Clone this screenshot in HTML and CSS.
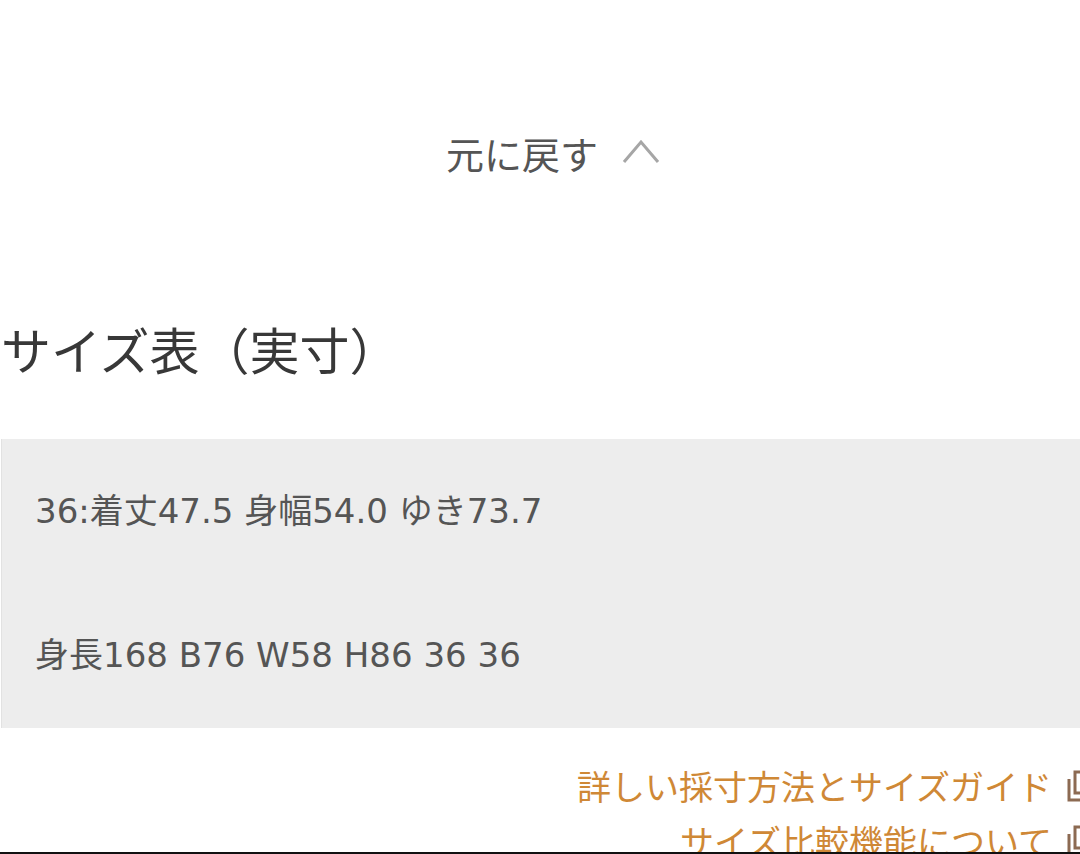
FILE: index.html
```html
<!DOCTYPE html>
<html lang="ja">
<head>
<meta charset="utf-8">
<link rel="stylesheet" href="styles.css">
</head>
<body>
<div class="page">
  <div class="collapse">
    <span class="collapse-label">元に戻す</span>
    <svg class="chevron" width="38" height="26" viewBox="0 0 38 26"><path d="M2 24 L19 4 L36 24" fill="none" stroke="#a6a6a6" stroke-width="3"/></svg>
  </div>
  <h2 class="title">サイズ表（実寸）</h2>
  <div class="size-box">
    <p class="size-row">36:着丈47.5 身幅54.0 ゆき73.7</p>
    <p class="size-row">身長168 B76 W58 H86 36 36</p>
  </div>
  <div class="links">
    <a class="link">詳しい採寸方法とサイズガイド<svg class="ext" width="30" height="34" viewBox="0 0 30 34"><path d="M9 3 H28 V24 H9 Z" fill="none" stroke="#8c6a52" stroke-width="3"/><path d="M3 10 V31 H22" fill="none" stroke="#8c6a52" stroke-width="3"/></svg></a>
    <a class="link">サイズ比較機能について<svg class="ext" width="30" height="34" viewBox="0 0 30 34"><path d="M9 3 H28 V24 H9 Z" fill="none" stroke="#8c6a52" stroke-width="3"/><path d="M3 10 V31 H22" fill="none" stroke="#8c6a52" stroke-width="3"/></svg></a>
  </div>
</div>
<div class="bottom-bar"></div>
</body>
</html>
```
FILE: styles.css
```css
html, body {
  margin: 0;
  padding: 0;
  background: #fff;
  overflow: hidden;
}
body {
  width: 1080px;
  height: 854px;
  position: relative;
  font-family: "Noto Sans CJK JP", "Noto Sans", sans-serif;
}
.page {
  height: 852px;
  overflow: hidden;
}
.collapse {
  display: flex;
  justify-content: center;
  align-items: center;
  gap: 24px;
  padding: 123px 0 0 26px;
  height: 60px;
}
.collapse-label {
  font-size: 38px;
  line-height: 56px;
  color: #555;
}
.chevron {
  display: block;
  margin-top: -4px;
}
.title {
  margin: 131px 0 0 1px;
  font-size: 50px;
  line-height: 68px;
  font-weight: normal;
  color: #383838;
}
.size-box {
  margin: 57px 0 0 1px;
  background: #ededed;
  height: 289px;
  box-sizing: border-box;
  padding: 48px 0 0 33px;
  display: flex;
  flex-direction: column;
  gap: 96px;
  border-left: 1px solid #e2e2e2;
}
.size-row {
  margin: 0;
  font-family: "DejaVu Sans", "Noto Sans CJK JP", sans-serif;
  font-size: 34px;
  line-height: 48px;
  color: #555;
}
.links {
  margin: 30px -16px 0 0;
  display: flex;
  flex-direction: column;
  align-items: flex-end;
}
.link {
  display: flex;
  align-items: center;
  gap: 14px;
  font-size: 34px;
  line-height: 55px;
  color: #cf8836;
  text-decoration: none;
}
.ext {
  display: block;
}
.bottom-bar {
  position: absolute;
  left: 0;
  right: 0;
  bottom: 0;
  height: 2px;
  background: #111;
}
```
